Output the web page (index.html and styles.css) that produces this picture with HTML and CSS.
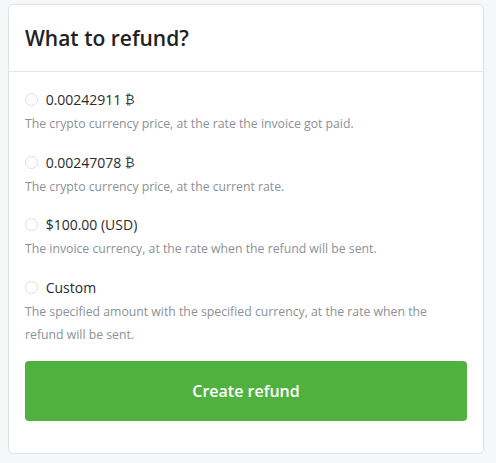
FILE: index.html
```html
<!DOCTYPE html>
<html lang="en">
<head>
  <meta charset="UTF-8" />
  <meta name="viewport" content="width=device-width, initial-scale=1.0" />
  <title>Refund</title>
  <link rel="stylesheet" href="styles.css">
</head>
<body>
  <div class="card">
    <div class="card-header">
      <h3>What to refund?</h3>
    </div>
    <div class="card-body">
      <div class="option">
        <label class="option-label"><input type="radio" name="what" /> 0.00242911 <span class="btc">₿</span></label>
        <p class="option-desc">The crypto currency price, at the rate the invoice got paid.</p>
      </div>
      <div class="option">
        <label class="option-label"><input type="radio" name="what" /> 0.00247078 <span class="btc">₿</span></label>
        <p class="option-desc">The crypto currency price, at the current rate.</p>
      </div>
      <div class="option">
        <label class="option-label"><input type="radio" name="what" /> $100.00 (USD)</label>
        <p class="option-desc">The invoice currency, at the rate when the refund will be sent.</p>
      </div>
      <div class="option">
        <label class="option-label"><input type="radio" name="what" /> Custom</label>
        <p class="option-desc">The specified amount with the specified currency, at the rate when the refund will be sent.</p>
      </div>
      <button class="btn-refund">Create refund</button>
    </div>
  </div>
</body>
</html>
```

FILE: styles.css
```css
body {
  margin: 0;
  padding: 4px 12px 0 8px;
  background: #f5f7f9;
  font-family: 'Open Sans', sans-serif;
  color: #2b2b2b;
}
.card {
  background: #fff;
  border: 1px solid #dfe3e7;
  border-radius: 5px;
}
.card-header {
  height: 66px;
  display: flex;
  align-items: center;
  padding: 0 16px;
  border-bottom: 1px solid #e5e8eb;
}
.card-header h3 {
  margin: 0;
  font-size: 21px;
  font-weight: 600;
  color: #222;
}
.card-body {
  padding: 17px 16px 32px;
}
.option {
  margin-bottom: 16.5px;
}
.option-label {
  display: flex;
  align-items: center;
  font-size: 14px;
  line-height: 21px;
  color: #2b2b2b;
  white-space: pre;
}
.option-label input {
  appearance: none;
  width: 13px;
  height: 13px;
  margin: 0 4px 0 0;
  border: 1px solid #dcdfe3;
  border-radius: 50%;
  background: #fff;
}
.btc {
  font-size: 13px;
  color: #444;
}
.option-desc {
  margin: 2px 0 0;
  font-size: 12.25px;
  line-height: 23px;
  color: #8c9196;
}
.btn-refund {
  display: block;
  width: 100%;
  height: 60px;
  margin-top: -1px;
  border: none;
  border-radius: 4px;
  background: #51b13f;
  color: #fff;
  font-family: 'Open Sans', sans-serif;
  font-size: 16px;
  font-weight: 600;
}
```
